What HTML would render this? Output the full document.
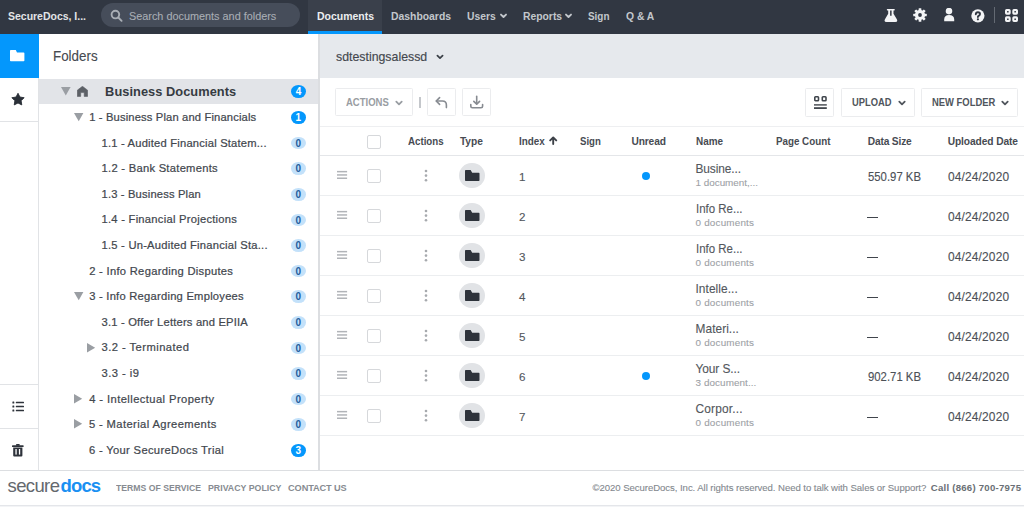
<!DOCTYPE html>
<html><head><meta charset="utf-8"><style>
html,body{margin:0;padding:0;}
body{width:1024px;height:507px;overflow:hidden;position:relative;background:#fff;font-family:"Liberation Sans",sans-serif;}
.r{position:absolute;display:block;}
.t{position:absolute;white-space:nowrap;font-family:"Liberation Sans",sans-serif;}
.badge{width:14.7px;height:12.8px;border-radius:50%;font-size:10px;line-height:14.6px;text-align:center;font-weight:700;font-family:"Liberation Sans",sans-serif;}
.cb{width:13.7px;height:14.1px;box-sizing:border-box;border:1px solid #d6d8db;border-radius:2px;background:#fff;}
</style></head><body>
<!-- NAV -->
<div class="r" style="left:0;top:0;width:1024px;height:34px;background:#313742"></div>
<div class="r" style="left:100.6px;top:3.4px;width:199.7px;height:24.1px;border-radius:12.1px;background:#464d5a"></div>
<svg class="r" style="left:109px;top:8.3px" width="16" height="16" viewBox="0 0 16 16"><circle cx="6.4" cy="6.6" r="3.8" fill="none" stroke="#a9aeb5" stroke-width="1.9"/><path d="M9.3 9.5 L12.6 12.8" stroke="#a9aeb5" stroke-width="1.9" stroke-linecap="round"/></svg>
<div class="r" style="left:308px;top:0;width:74px;height:34px;background:#3a404b"></div>
<div class="r" style="left:308px;top:30.6px;width:74px;height:3px;background:#0497fc"></div>
<svg class="r" style="left:499px;top:12.0px" width="10" height="8" viewBox="0 0 10 8"><path d="M2.0 2.6 L4.5 5.0 L7.0 2.6" fill="none" stroke="#c3c7cc" stroke-width="1.9" stroke-linecap="round" stroke-linejoin="round"/></svg>
<svg class="r" style="left:563.5px;top:12.0px" width="10" height="8" viewBox="0 0 10 8"><path d="M2.0 2.6 L4.5 5.0 L7.0 2.6" fill="none" stroke="#c3c7cc" stroke-width="1.9" stroke-linecap="round" stroke-linejoin="round"/></svg>
<!-- flask -->
<svg class="r" style="left:884.4px;top:8.8px" width="14" height="14" viewBox="0 0 14 14"><path d="M3.4 0 H10.2 Q10.8 0 10.8 0.7 Q10.8 1.4 10.2 1.4 H9.5 V4.8 L12.4 9.6 Q14.6 13.1 11.2 13.1 H2.6 Q-0.8 13.1 1.4 9.6 L4.2 4.8 V1.4 H3.4 Q2.8 1.4 2.8 0.7 Q2.8 0 3.4 0 Z" fill="#f3f4f6"/><path d="M6.1 1.4 V6.8 H7.6 V1.4 Z" fill="#313742"/></svg>
<!-- gear -->
<svg class="r" style="left:912.9px;top:8.1px" width="14" height="14" viewBox="0 0 14 14"><g fill="#f3f4f6" transform="translate(7 7)"><circle r="5.1"/><rect x="-1.35" y="-6.75" width="2.7" height="13.5" rx="0.5"/><rect x="-1.35" y="-6.75" width="2.7" height="13.5" rx="0.5" transform="rotate(45)"/><rect x="-1.35" y="-6.75" width="2.7" height="13.5" rx="0.5" transform="rotate(90)"/><rect x="-1.35" y="-6.75" width="2.7" height="13.5" rx="0.5" transform="rotate(135)"/></g><circle cx="7" cy="7" r="1.9" fill="#313742"/></svg>
<!-- user -->
<svg class="r" style="left:943.5px;top:8.4px" width="11" height="14" viewBox="0 0 11 14"><circle cx="5.0" cy="3.1" r="3.3" fill="#f3f4f6"/><path d="M0.2 13.2 V11.6 Q0.2 7.0 5.1 7.0 Q10.2 7.0 10.2 11.6 V13.2 Z" fill="#f3f4f6"/></svg>
<!-- help -->
<svg class="r" style="left:970.5px;top:8.6px" width="14" height="14" viewBox="0 0 14 14"><circle cx="6.9" cy="6.8" r="6.6" fill="#f3f4f6"/><path d="M4.8 5.3 Q4.9 3.2 6.9 3.2 Q9.0 3.2 9.0 5.0 Q9.0 6.2 7.7 6.8 Q6.9 7.2 6.9 8.1" fill="none" stroke="#313742" stroke-width="1.9" stroke-linecap="round"/><circle cx="6.9" cy="10.3" r="1.1" fill="#313742"/></svg>
<div class="r" style="left:993.8px;top:7.2px;width:1.1px;height:15.4px;background:#646a73"></div>
<!-- grid -->
<svg class="r" style="left:1004.8px;top:8.6px" width="14" height="14" viewBox="0 0 14 14"><g fill="none" stroke="#f3f4f6" stroke-width="2.1"><rect x="1.05" y="1.05" width="3.6" height="3.6" rx="0.6"/><rect x="8.35" y="1.05" width="3.6" height="3.6" rx="0.6"/><rect x="1.05" y="8.35" width="3.6" height="3.6" rx="0.6"/><rect x="8.35" y="8.35" width="3.6" height="3.6" rx="0.6"/></g></svg>

<!-- LEFT ICON SIDEBAR -->
<div class="r" style="left:0;top:34px;width:39px;height:43.6px;background:#0497fc"></div>
<svg class="r" style="left:10.3px;top:50.2px" width="15" height="12" viewBox="0 0 15 12"><path d="M0.8 0 H5.8 L7.0 2.5 H13.6 Q14.4 2.5 14.4 3.3 V10.4 Q14.4 11.2 13.6 11.2 H0.8 Q0 11.2 0 10.4 V0.8 Q0 0 0.8 0 Z" fill="#ffffff"/></svg>
<svg class="r" style="left:10.9px;top:92.3px" width="14" height="14" viewBox="0 0 24 24"><path d="M12.00 2.20 L15.29 8.67 L22.46 9.80 L17.33 14.93 L18.47 22.10 L12.00 18.80 L5.53 22.10 L6.67 14.93 L1.54 9.80 L8.71 8.67 Z" fill="#2b3038" stroke="#2b3038" stroke-width="1.6" stroke-linejoin="round"/></svg>
<div class="r" style="left:0;top:121.4px;width:38.5px;height:1px;background:#e1e3e6"></div>
<div class="r" style="left:38.4px;top:77.6px;width:1px;height:393px;background:#e1e3e6"></div>
<div class="r" style="left:0;top:384.3px;width:38.5px;height:1px;background:#e1e3e6"></div>
<div class="r" style="left:0;top:428px;width:38.5px;height:1px;background:#e1e3e6"></div>
<svg class="r" style="left:11.5px;top:400.5px" width="13" height="11" viewBox="0 0 13 11"><g fill="#2e333b"><rect x="0.4" y="0.6" width="1.9" height="1.9" rx="0.5"/><rect x="0.4" y="4.6" width="1.9" height="1.9" rx="0.5"/><rect x="0.4" y="8.6" width="1.9" height="1.9" rx="0.5"/><rect x="3.8" y="0.8" width="8.2" height="1.5" rx="0.5"/><rect x="3.8" y="4.8" width="8.2" height="1.5" rx="0.5"/><rect x="3.8" y="8.8" width="8.2" height="1.5" rx="0.5"/></g></svg>
<svg class="r" style="left:11.8px;top:443.8px" width="12" height="13" viewBox="0 0 12 13"><g fill="#2e333b"><rect x="0" y="1.3" width="11.6" height="1.8" rx="0.4"/><rect x="4" y="0" width="3.6" height="1.8" rx="0.4"/><path d="M1.2 3.6 H10.4 V11.6 Q10.4 12.6 9.4 12.6 H2.2 Q1.2 12.6 1.2 11.6 Z"/></g><g fill="#ffffff"><rect x="3.4" y="5" width="1.3" height="5.6"/><rect x="6.9" y="5" width="1.3" height="5.6"/></g></svg>

<!-- FOLDER PANEL -->
<div class="r" style="left:39.4px;top:78.7px;width:278.8px;height:24.9px;background:#e2e4e8"></div>
<div class="r" style="left:318.2px;top:34px;width:1.4px;height:436.5px;background:#dcdee1"></div>
<svg class="r" style="left:60.6px;top:86.8px" width="10" height="9" viewBox="0 0 10 9"><path d="M0 0 H9.6 L4.8 8.4 Z" fill="#9a9ea3"/></svg>
<svg class="r" style="left:76.9px;top:85.5px" width="11" height="12" viewBox="0 0 11 12"><path d="M5.45 0.3 L10.6 4.2 V10.4 H7.2 V6.6 H3.7 V10.4 H0.3 V4.2 Z" fill="#5c6066" stroke="#5c6066" stroke-width="0.6" stroke-linejoin="round"/></svg>

<svg class="r" style="left:74.0px;top:112.60px" width="10" height="9" viewBox="0 0 10 9"><path d="M0 0 H9.4 L4.7 8.2 Z" fill="#9a9ea3"/></svg>
<div class="r badge" style="left:291.0px;top:111.10px;background:#0497fc;color:#ffffff">1</div>
<div class="r badge" style="left:291.0px;top:136.70px;background:#c3e1fa;color:#1f5c9c">0</div>
<div class="r badge" style="left:291.0px;top:162.30px;background:#c3e1fa;color:#1f5c9c">0</div>
<div class="r badge" style="left:291.0px;top:187.90px;background:#c3e1fa;color:#1f5c9c">0</div>
<div class="r badge" style="left:291.0px;top:213.50px;background:#c3e1fa;color:#1f5c9c">0</div>
<div class="r badge" style="left:291.0px;top:239.10px;background:#c3e1fa;color:#1f5c9c">0</div>
<div class="r badge" style="left:291.0px;top:264.70px;background:#c3e1fa;color:#1f5c9c">0</div>
<svg class="r" style="left:74.0px;top:291.80px" width="10" height="9" viewBox="0 0 10 9"><path d="M0 0 H9.4 L4.7 8.2 Z" fill="#9a9ea3"/></svg>
<div class="r badge" style="left:291.0px;top:290.30px;background:#c3e1fa;color:#1f5c9c">0</div>
<div class="r badge" style="left:291.0px;top:315.90px;background:#c3e1fa;color:#1f5c9c">0</div>
<svg class="r" style="left:87.0px;top:342.60px" width="9" height="10" viewBox="0 0 9 10"><path d="M0 0 L8.2 4.7 L0 9.4 Z" fill="#9a9ea3"/></svg>
<div class="r badge" style="left:291.0px;top:341.50px;background:#c3e1fa;color:#1f5c9c">0</div>
<div class="r badge" style="left:291.0px;top:367.10px;background:#c3e1fa;color:#1f5c9c">0</div>
<svg class="r" style="left:74.2px;top:393.80px" width="9" height="10" viewBox="0 0 9 10"><path d="M0 0 L8.2 4.7 L0 9.4 Z" fill="#9a9ea3"/></svg>
<div class="r badge" style="left:291.0px;top:392.70px;background:#c3e1fa;color:#1f5c9c">0</div>
<svg class="r" style="left:74.2px;top:419.40px" width="9" height="10" viewBox="0 0 9 10"><path d="M0 0 L8.2 4.7 L0 9.4 Z" fill="#9a9ea3"/></svg>
<div class="r badge" style="left:291.0px;top:418.30px;background:#c3e1fa;color:#1f5c9c">0</div>
<div class="r badge" style="left:291.0px;top:443.90px;background:#0497fc;color:#ffffff">3</div>
<div class="r badge" style="left:291.0px;top:85.40px;width:14.9px;background:#0497fc;color:#fff">4</div>
<div class="r" style="left:319.6px;top:34px;width:704.4px;height:43.9px;background:#e6e9ed"></div>
<div class="r" style="left:335.2px;top:88.2px;width:77.4px;height:28.2px;box-sizing:border-box;border:1px solid #ebecee;border-radius:1.5px;background:#fff"></div>
<div class="r" style="left:427.4px;top:88.2px;width:28.2px;height:28.2px;box-sizing:border-box;border:1px solid #ebecee;border-radius:1.5px;background:#fff"></div>
<div class="r" style="left:462.3px;top:88.2px;width:28.7px;height:28.2px;box-sizing:border-box;border:1px solid #ebecee;border-radius:1.5px;background:#fff"></div>
<div class="r" style="left:805.3px;top:87.9px;width:29.2px;height:28.8px;box-sizing:border-box;border:1px solid #ebecee;border-radius:1.5px;background:#fff"></div>
<div class="r" style="left:840.7px;top:87.9px;width:74.5px;height:28.8px;box-sizing:border-box;border:1px solid #ebecee;border-radius:1.5px;background:#fff"></div>
<div class="r" style="left:921.4px;top:87.9px;width:97.1px;height:28.8px;box-sizing:border-box;border:1px solid #ebecee;border-radius:1.5px;background:#fff"></div>
<svg class="r" style="left:395.3px;top:100.0px" width="9" height="7" viewBox="0 0 9 7"><path d="M1.3 1.6 L4 4.3 L6.7 1.6" fill="none" stroke="#999da2" stroke-width="1.8" stroke-linecap="round" stroke-linejoin="round"/></svg>
<svg class="r" style="left:897.6px;top:100.0px" width="9" height="7" viewBox="0 0 9 7"><path d="M1.3 1.6 L4 4.3 L6.7 1.6" fill="none" stroke="#50555c" stroke-width="1.8" stroke-linecap="round" stroke-linejoin="round"/></svg>
<svg class="r" style="left:1000.6px;top:100.0px" width="9" height="7" viewBox="0 0 9 7"><path d="M1.3 1.6 L4 4.3 L6.7 1.6" fill="none" stroke="#50555c" stroke-width="1.8" stroke-linecap="round" stroke-linejoin="round"/></svg>
<svg class="r" style="left:435.8px;top:54.3px" width="9" height="7" viewBox="0 0 9 7"><path d="M1.4 1.6 L4 4.2 L6.6 1.6" fill="none" stroke="#3b4047" stroke-width="1.7" stroke-linecap="round" stroke-linejoin="round"/></svg>
<div class="r" style="left:419.4px;top:96.7px;width:1.2px;height:11.8px;background:#c4c7cb"></div>
<svg class="r" style="left:433.5px;top:94.5px" width="16" height="16" viewBox="0 0 16 16"><path d="M5.6 2.6 L2.2 6 L5.6 9.4" fill="none" stroke="#878b91" stroke-width="1.6" stroke-linecap="round" stroke-linejoin="round"/><path d="M2.5 6 H8.4 Q12.4 6 12.4 10 V12.6" fill="none" stroke="#878b91" stroke-width="1.6" stroke-linecap="round"/></svg>
<svg class="r" style="left:469px;top:94.5px" width="16" height="16" viewBox="0 0 16 16"><path d="M7.7 1.4 V8.8" stroke="#878b91" stroke-width="1.6" stroke-linecap="round"/><path d="M4.8 6.4 L7.7 9.2 L10.6 6.4" fill="none" stroke="#878b91" stroke-width="1.6" stroke-linecap="round" stroke-linejoin="round"/><path d="M1.8 9.6 V11.2 Q1.8 12.8 3.4 12.8 H12 Q13.6 12.8 13.6 11.2 V9.6" fill="none" stroke="#878b91" stroke-width="1.6" stroke-linejoin="round" stroke-linecap="round"/></svg>
<svg class="r" style="left:813.5px;top:95.9px" width="13" height="14" viewBox="0 0 13 14"><g fill="none" stroke="#41464d" stroke-width="1.6"><rect x="0.8" y="0.8" width="3.7" height="3.9" rx="0.7"/><rect x="8.3" y="0.8" width="3.7" height="3.9" rx="0.7"/></g><rect x="0" y="8.2" width="12.8" height="1.4" fill="#41464d"/><rect x="0" y="11.2" width="12.8" height="1.8" fill="#41464d"/></svg>
<div class="r" style="left:319.6px;top:126.2px;width:704.4px;height:1px;background:#eeeff1"></div>
<div class="r" style="left:319.6px;top:154.8px;width:704.4px;height:1.2px;background:#e4e6e9"></div>
<div class="r cb" style="left:366.9px;top:134.5px"></div>
<svg class="r" style="left:549.3px;top:135.9px" width="10" height="10" viewBox="0 0 10 10"><path d="M4.2 8.0 V1.8 M1.2 4.4 L4.2 1.4 L7.2 4.4" fill="none" stroke="#3d4148" stroke-width="1.9" stroke-linecap="round" stroke-linejoin="round"/></svg>
<div class="r" style="left:319.6px;top:195.1px;width:704.4px;height:1px;background:#eceef0"></div>
<svg class="r" style="left:336.6px;top:170.0px" width="11" height="9" viewBox="0 0 11 9"><g fill="#b1b4b8"><rect x="0" y="0.9" width="10.1" height="1.5"/><rect x="0" y="4.2" width="10.1" height="1.5"/><rect x="0" y="7.5" width="10.1" height="1.5"/></g></svg>
<div class="r cb" style="left:367.1px;top:168.9px"></div>
<svg class="r" style="left:423.5px;top:168.5px" width="4" height="14" viewBox="0 0 4 14"><g fill="#a7aaae"><circle cx="2" cy="2" r="1.3"/><circle cx="2" cy="6.6" r="1.3"/><circle cx="2" cy="11.2" r="1.3"/></g></svg>
<div class="r" style="left:459.1px;top:162.6px;width:25.6px;height:25.6px;border-radius:50%;background:#e1e3e6"></div>
<svg class="r" style="left:464.8px;top:170.1px" width="15" height="11" viewBox="0 0 15 11"><path d="M0.8 0 H5.6 L7.2 2.7 H13.7 Q14.5 2.7 14.5 3.5 V10.2 Q14.5 11 13.7 11 H0.8 Q0 11 0 10.2 V0.8 Q0 0 0.8 0 Z" fill="#2e333b"/></svg>
<div class="r" style="left:641.7px;top:171.9px;width:8.2px;height:8.2px;border-radius:50%;background:#0497fc"></div>
<div class="r" style="left:319.6px;top:235.1px;width:704.4px;height:1px;background:#eceef0"></div>
<svg class="r" style="left:336.6px;top:210.0px" width="11" height="9" viewBox="0 0 11 9"><g fill="#b1b4b8"><rect x="0" y="0.9" width="10.1" height="1.5"/><rect x="0" y="4.2" width="10.1" height="1.5"/><rect x="0" y="7.5" width="10.1" height="1.5"/></g></svg>
<div class="r cb" style="left:367.1px;top:208.9px"></div>
<svg class="r" style="left:423.5px;top:208.5px" width="4" height="14" viewBox="0 0 4 14"><g fill="#a7aaae"><circle cx="2" cy="2" r="1.3"/><circle cx="2" cy="6.6" r="1.3"/><circle cx="2" cy="11.2" r="1.3"/></g></svg>
<div class="r" style="left:459.1px;top:202.6px;width:25.6px;height:25.6px;border-radius:50%;background:#e1e3e6"></div>
<svg class="r" style="left:464.8px;top:210.1px" width="15" height="11" viewBox="0 0 15 11"><path d="M0.8 0 H5.6 L7.2 2.7 H13.7 Q14.5 2.7 14.5 3.5 V10.2 Q14.5 11 13.7 11 H0.8 Q0 11 0 10.2 V0.8 Q0 0 0.8 0 Z" fill="#2e333b"/></svg>
<div class="r" style="left:866.7px;top:217.0px;width:11.4px;height:1.2px;background:#40454c"></div>
<div class="r" style="left:319.6px;top:275.1px;width:704.4px;height:1px;background:#eceef0"></div>
<svg class="r" style="left:336.6px;top:250.0px" width="11" height="9" viewBox="0 0 11 9"><g fill="#b1b4b8"><rect x="0" y="0.9" width="10.1" height="1.5"/><rect x="0" y="4.2" width="10.1" height="1.5"/><rect x="0" y="7.5" width="10.1" height="1.5"/></g></svg>
<div class="r cb" style="left:367.1px;top:248.9px"></div>
<svg class="r" style="left:423.5px;top:248.5px" width="4" height="14" viewBox="0 0 4 14"><g fill="#a7aaae"><circle cx="2" cy="2" r="1.3"/><circle cx="2" cy="6.6" r="1.3"/><circle cx="2" cy="11.2" r="1.3"/></g></svg>
<div class="r" style="left:459.1px;top:242.6px;width:25.6px;height:25.6px;border-radius:50%;background:#e1e3e6"></div>
<svg class="r" style="left:464.8px;top:250.1px" width="15" height="11" viewBox="0 0 15 11"><path d="M0.8 0 H5.6 L7.2 2.7 H13.7 Q14.5 2.7 14.5 3.5 V10.2 Q14.5 11 13.7 11 H0.8 Q0 11 0 10.2 V0.8 Q0 0 0.8 0 Z" fill="#2e333b"/></svg>
<div class="r" style="left:866.7px;top:257.0px;width:11.4px;height:1.2px;background:#40454c"></div>
<div class="r" style="left:319.6px;top:315.1px;width:704.4px;height:1px;background:#eceef0"></div>
<svg class="r" style="left:336.6px;top:290.0px" width="11" height="9" viewBox="0 0 11 9"><g fill="#b1b4b8"><rect x="0" y="0.9" width="10.1" height="1.5"/><rect x="0" y="4.2" width="10.1" height="1.5"/><rect x="0" y="7.5" width="10.1" height="1.5"/></g></svg>
<div class="r cb" style="left:367.1px;top:288.9px"></div>
<svg class="r" style="left:423.5px;top:288.5px" width="4" height="14" viewBox="0 0 4 14"><g fill="#a7aaae"><circle cx="2" cy="2" r="1.3"/><circle cx="2" cy="6.6" r="1.3"/><circle cx="2" cy="11.2" r="1.3"/></g></svg>
<div class="r" style="left:459.1px;top:282.6px;width:25.6px;height:25.6px;border-radius:50%;background:#e1e3e6"></div>
<svg class="r" style="left:464.8px;top:290.1px" width="15" height="11" viewBox="0 0 15 11"><path d="M0.8 0 H5.6 L7.2 2.7 H13.7 Q14.5 2.7 14.5 3.5 V10.2 Q14.5 11 13.7 11 H0.8 Q0 11 0 10.2 V0.8 Q0 0 0.8 0 Z" fill="#2e333b"/></svg>
<div class="r" style="left:866.7px;top:297.0px;width:11.4px;height:1.2px;background:#40454c"></div>
<div class="r" style="left:319.6px;top:355.1px;width:704.4px;height:1px;background:#eceef0"></div>
<svg class="r" style="left:336.6px;top:330.0px" width="11" height="9" viewBox="0 0 11 9"><g fill="#b1b4b8"><rect x="0" y="0.9" width="10.1" height="1.5"/><rect x="0" y="4.2" width="10.1" height="1.5"/><rect x="0" y="7.5" width="10.1" height="1.5"/></g></svg>
<div class="r cb" style="left:367.1px;top:328.9px"></div>
<svg class="r" style="left:423.5px;top:328.5px" width="4" height="14" viewBox="0 0 4 14"><g fill="#a7aaae"><circle cx="2" cy="2" r="1.3"/><circle cx="2" cy="6.6" r="1.3"/><circle cx="2" cy="11.2" r="1.3"/></g></svg>
<div class="r" style="left:459.1px;top:322.6px;width:25.6px;height:25.6px;border-radius:50%;background:#e1e3e6"></div>
<svg class="r" style="left:464.8px;top:330.1px" width="15" height="11" viewBox="0 0 15 11"><path d="M0.8 0 H5.6 L7.2 2.7 H13.7 Q14.5 2.7 14.5 3.5 V10.2 Q14.5 11 13.7 11 H0.8 Q0 11 0 10.2 V0.8 Q0 0 0.8 0 Z" fill="#2e333b"/></svg>
<div class="r" style="left:866.7px;top:337.0px;width:11.4px;height:1.2px;background:#40454c"></div>
<div class="r" style="left:319.6px;top:395.1px;width:704.4px;height:1px;background:#eceef0"></div>
<svg class="r" style="left:336.6px;top:370.0px" width="11" height="9" viewBox="0 0 11 9"><g fill="#b1b4b8"><rect x="0" y="0.9" width="10.1" height="1.5"/><rect x="0" y="4.2" width="10.1" height="1.5"/><rect x="0" y="7.5" width="10.1" height="1.5"/></g></svg>
<div class="r cb" style="left:367.1px;top:368.9px"></div>
<svg class="r" style="left:423.5px;top:368.5px" width="4" height="14" viewBox="0 0 4 14"><g fill="#a7aaae"><circle cx="2" cy="2" r="1.3"/><circle cx="2" cy="6.6" r="1.3"/><circle cx="2" cy="11.2" r="1.3"/></g></svg>
<div class="r" style="left:459.1px;top:362.6px;width:25.6px;height:25.6px;border-radius:50%;background:#e1e3e6"></div>
<svg class="r" style="left:464.8px;top:370.1px" width="15" height="11" viewBox="0 0 15 11"><path d="M0.8 0 H5.6 L7.2 2.7 H13.7 Q14.5 2.7 14.5 3.5 V10.2 Q14.5 11 13.7 11 H0.8 Q0 11 0 10.2 V0.8 Q0 0 0.8 0 Z" fill="#2e333b"/></svg>
<div class="r" style="left:641.7px;top:371.9px;width:8.2px;height:8.2px;border-radius:50%;background:#0497fc"></div>
<div class="r" style="left:319.6px;top:435.1px;width:704.4px;height:1px;background:#eceef0"></div>
<svg class="r" style="left:336.6px;top:410.0px" width="11" height="9" viewBox="0 0 11 9"><g fill="#b1b4b8"><rect x="0" y="0.9" width="10.1" height="1.5"/><rect x="0" y="4.2" width="10.1" height="1.5"/><rect x="0" y="7.5" width="10.1" height="1.5"/></g></svg>
<div class="r cb" style="left:367.1px;top:408.9px"></div>
<svg class="r" style="left:423.5px;top:408.5px" width="4" height="14" viewBox="0 0 4 14"><g fill="#a7aaae"><circle cx="2" cy="2" r="1.3"/><circle cx="2" cy="6.6" r="1.3"/><circle cx="2" cy="11.2" r="1.3"/></g></svg>
<div class="r" style="left:459.1px;top:402.6px;width:25.6px;height:25.6px;border-radius:50%;background:#e1e3e6"></div>
<svg class="r" style="left:464.8px;top:410.1px" width="15" height="11" viewBox="0 0 15 11"><path d="M0.8 0 H5.6 L7.2 2.7 H13.7 Q14.5 2.7 14.5 3.5 V10.2 Q14.5 11 13.7 11 H0.8 Q0 11 0 10.2 V0.8 Q0 0 0.8 0 Z" fill="#2e333b"/></svg>
<div class="r" style="left:866.7px;top:417.0px;width:11.4px;height:1.2px;background:#40454c"></div>
<div class="r" style="left:0;top:470px;width:1024px;height:37px;background:#ffffff"></div>
<div class="r" style="left:0;top:470px;width:1024px;height:1.2px;background:#dcdee1"></div>
<div class="r" style="left:0;top:505.6px;width:1024px;height:1.4px;background:#f3f4f6"></div>
<div class="r" style="left:0;top:504.8px;width:1024px;height:1.1px;background:#e4e6ea"></div>
<span class="t" style="left:7.5px;top:477.2px;font-size:18.5px;line-height:18.5px;color:#64686d;letter-spacing:-0.62px;font-weight:400">secure</span>
<span class="t" style="left:60.6px;top:477.2px;font-size:18.5px;line-height:18.5px;color:#1a90f2;letter-spacing:-0.9px;font-weight:700">docs</span>
<span class="t" style="left:8.10px;top:10.72px;font-size:11.2px;line-height:11.2px;font-weight:700;color:#e2e4e7;letter-spacing:0.000px;transform:scaleX(0.9361);transform-origin:0 0">SecureDocs, I...</span>
<span class="t" style="left:128.70px;top:10.62px;font-size:11.2px;line-height:11.2px;font-weight:400;color:#a9aeb5;letter-spacing:0.000px;-webkit-text-stroke:0.1px #a9aeb5;transform:scaleX(0.9707);transform-origin:0 0">Search documents and folders</span>
<span class="t" style="left:317.20px;top:10.72px;font-size:11.2px;line-height:11.2px;font-weight:700;color:#eceef0;letter-spacing:0.000px;transform:scaleX(0.9356);transform-origin:0 0">Documents</span>
<span class="t" style="left:390.80px;top:10.72px;font-size:11.2px;line-height:11.2px;font-weight:700;color:#c3c7cc;letter-spacing:0.000px;transform:scaleX(0.9280);transform-origin:0 0">Dashboards</span>
<span class="t" style="left:467.40px;top:10.72px;font-size:11.2px;line-height:11.2px;font-weight:700;color:#c3c7cc;letter-spacing:0.000px;transform:scaleX(0.9226);transform-origin:0 0">Users</span>
<span class="t" style="left:522.50px;top:10.72px;font-size:11.2px;line-height:11.2px;font-weight:700;color:#c3c7cc;letter-spacing:0.000px;transform:scaleX(0.9248);transform-origin:0 0">Reports</span>
<span class="t" style="left:587.90px;top:10.72px;font-size:11.2px;line-height:11.2px;font-weight:700;color:#c3c7cc;letter-spacing:0.000px;transform:scaleX(0.8866);transform-origin:0 0">Sign</span>
<span class="t" style="left:626.00px;top:10.72px;font-size:11.2px;line-height:11.2px;font-weight:700;color:#c3c7cc;letter-spacing:0.000px;transform:scaleX(0.9227);transform-origin:0 0">Q &amp; A</span>
<span class="t" style="left:52.60px;top:49.35px;font-size:14.0px;line-height:14.0px;font-weight:400;color:#464a50;letter-spacing:0.000px;-webkit-text-stroke:0.12px #464a50;transform:scaleX(0.9553);transform-origin:0 0">Folders</span>
<span class="t" style="left:105.10px;top:85.56px;font-size:12.8px;line-height:12.8px;font-weight:700;color:#363b42;letter-spacing:0.051px">Business Documents</span>
<span class="t" style="left:89.20px;top:111.92px;font-size:11.2px;line-height:11.2px;font-weight:400;color:#42474e;letter-spacing:0.151px;-webkit-text-stroke:0.22px #42474e">1 - Business Plan and Financials</span>
<span class="t" style="left:101.50px;top:137.52px;font-size:11.2px;line-height:11.2px;font-weight:400;color:#42474e;letter-spacing:0.201px;-webkit-text-stroke:0.22px #42474e">1.1 - Audited Financial Statem...</span>
<span class="t" style="left:101.50px;top:163.12px;font-size:11.2px;line-height:11.2px;font-weight:400;color:#42474e;letter-spacing:0.275px;-webkit-text-stroke:0.22px #42474e">1.2 - Bank Statements</span>
<span class="t" style="left:101.50px;top:188.72px;font-size:11.2px;line-height:11.2px;font-weight:400;color:#42474e;letter-spacing:0.162px;-webkit-text-stroke:0.22px #42474e">1.3 - Business Plan</span>
<span class="t" style="left:101.50px;top:214.32px;font-size:11.2px;line-height:11.2px;font-weight:400;color:#42474e;letter-spacing:0.257px;-webkit-text-stroke:0.22px #42474e">1.4 - Financial Projections</span>
<span class="t" style="left:101.50px;top:239.92px;font-size:11.2px;line-height:11.2px;font-weight:400;color:#42474e;letter-spacing:0.232px;-webkit-text-stroke:0.22px #42474e">1.5 - Un-Audited Financial Sta...</span>
<span class="t" style="left:89.20px;top:265.52px;font-size:11.2px;line-height:11.2px;font-weight:400;color:#42474e;letter-spacing:0.292px;-webkit-text-stroke:0.22px #42474e">2 - Info Regarding Disputes</span>
<span class="t" style="left:89.20px;top:291.12px;font-size:11.2px;line-height:11.2px;font-weight:400;color:#42474e;letter-spacing:0.240px;-webkit-text-stroke:0.22px #42474e">3 - Info Regarding Employees</span>
<span class="t" style="left:101.50px;top:316.72px;font-size:11.2px;line-height:11.2px;font-weight:400;color:#42474e;letter-spacing:0.191px;-webkit-text-stroke:0.22px #42474e">3.1 - Offer Letters and EPIIA</span>
<span class="t" style="left:101.50px;top:342.32px;font-size:11.2px;line-height:11.2px;font-weight:400;color:#42474e;letter-spacing:0.457px;-webkit-text-stroke:0.22px #42474e">3.2 - Terminated</span>
<span class="t" style="left:101.50px;top:367.92px;font-size:11.2px;line-height:11.2px;font-weight:400;color:#42474e;letter-spacing:0.471px;-webkit-text-stroke:0.22px #42474e">3.3 - i9</span>
<span class="t" style="left:89.20px;top:393.52px;font-size:11.2px;line-height:11.2px;font-weight:400;color:#42474e;letter-spacing:0.415px;-webkit-text-stroke:0.22px #42474e">4 - Intellectual Property</span>
<span class="t" style="left:88.90px;top:419.12px;font-size:11.2px;line-height:11.2px;font-weight:400;color:#42474e;letter-spacing:0.392px;-webkit-text-stroke:0.22px #42474e">5 - Material Agreements</span>
<span class="t" style="left:88.90px;top:444.72px;font-size:11.2px;line-height:11.2px;font-weight:400;color:#42474e;letter-spacing:0.335px;-webkit-text-stroke:0.22px #42474e">6 - Your SecureDocs Trial</span>
<span class="t" style="left:335.60px;top:51.06px;font-size:12.8px;line-height:12.8px;font-weight:400;color:#43474d;letter-spacing:0.000px;-webkit-text-stroke:0.15px #43474d;transform:scaleX(0.9640);transform-origin:0 0">sdtestingsalessd</span>
<span class="t" style="left:346.10px;top:98.23px;font-size:10.0px;line-height:10.0px;font-weight:700;color:#999da2;letter-spacing:0.000px;transform:scaleX(0.9511);transform-origin:0 0">ACTIONS</span>
<span class="t" style="left:851.70px;top:98.23px;font-size:10.0px;line-height:10.0px;font-weight:700;color:#50555c;letter-spacing:0.000px;transform:scaleX(0.9353);transform-origin:0 0">UPLOAD</span>
<span class="t" style="left:931.70px;top:98.23px;font-size:10.0px;line-height:10.0px;font-weight:700;color:#50555c;letter-spacing:0.000px;transform:scaleX(0.9417);transform-origin:0 0">NEW FOLDER</span>
<span class="t" style="left:407.90px;top:136.96px;font-size:10.2px;line-height:10.2px;font-weight:700;color:#474b52;letter-spacing:0.000px;transform:scaleX(0.9529);transform-origin:0 0">Actions</span>
<span class="t" style="left:459.90px;top:136.96px;font-size:10.2px;line-height:10.2px;font-weight:700;color:#474b52;letter-spacing:-0.010px">Type</span>
<span class="t" style="left:519.20px;top:136.96px;font-size:10.2px;line-height:10.2px;font-weight:700;color:#474b52;letter-spacing:0.000px;transform:scaleX(0.9696);transform-origin:0 0">Index</span>
<span class="t" style="left:579.50px;top:136.96px;font-size:10.2px;line-height:10.2px;font-weight:700;color:#474b52;letter-spacing:0.000px;transform:scaleX(0.9421);transform-origin:0 0">Sign</span>
<span class="t" style="left:631.50px;top:136.96px;font-size:10.2px;line-height:10.2px;font-weight:700;color:#474b52;letter-spacing:-0.142px">Unread</span>
<span class="t" style="left:695.50px;top:136.96px;font-size:10.2px;line-height:10.2px;font-weight:700;color:#474b52;letter-spacing:0.000px;transform:scaleX(0.9730);transform-origin:0 0">Name</span>
<span class="t" style="left:775.60px;top:136.96px;font-size:10.2px;line-height:10.2px;font-weight:700;color:#474b52;letter-spacing:0.000px;transform:scaleX(0.9610);transform-origin:0 0">Page Count</span>
<span class="t" style="left:867.70px;top:136.96px;font-size:10.2px;line-height:10.2px;font-weight:700;color:#474b52;letter-spacing:-0.150px">Data Size</span>
<span class="t" style="left:947.70px;top:136.96px;font-size:10.2px;line-height:10.2px;font-weight:700;color:#474b52;letter-spacing:-0.086px">Uploaded Date</span>
<span class="t" style="left:519.00px;top:170.78px;font-size:11.6px;line-height:11.6px;font-weight:400;color:#53575d;letter-spacing:0.000px;-webkit-text-stroke:0.12px #53575d">1</span>
<span class="t" style="left:695.50px;top:163.62px;font-size:11.9px;line-height:11.9px;font-weight:400;color:#53575d;letter-spacing:-0.098px;-webkit-text-stroke:0.12px #53575d">Busine...</span>
<span class="t" style="left:695.50px;top:178.12px;font-size:9.9px;line-height:9.9px;font-weight:400;color:#9da1a6;letter-spacing:-0.006px;-webkit-text-stroke:0.1px #9da1a6">1 document,...</span>
<span class="t" style="left:867.90px;top:172.22px;font-size:11.9px;line-height:11.9px;font-weight:400;color:#4c5056;letter-spacing:0.000px;-webkit-text-stroke:0.12px #4c5056;transform:scaleX(0.9541);transform-origin:0 0">550.97 KB</span>
<span class="t" style="left:947.90px;top:172.22px;font-size:11.9px;line-height:11.9px;font-weight:400;color:#4c5056;letter-spacing:0.187px;-webkit-text-stroke:0.12px #4c5056">04/24/2020</span>
<span class="t" style="left:519.00px;top:210.78px;font-size:11.6px;line-height:11.6px;font-weight:400;color:#53575d;letter-spacing:0.000px;-webkit-text-stroke:0.12px #53575d">2</span>
<span class="t" style="left:695.50px;top:203.62px;font-size:11.9px;line-height:11.9px;font-weight:400;color:#53575d;letter-spacing:0.000px;-webkit-text-stroke:0.12px #53575d;transform:scaleX(0.9637);transform-origin:0 0">Info Re...</span>
<span class="t" style="left:695.50px;top:218.12px;font-size:9.9px;line-height:9.9px;font-weight:400;color:#9da1a6;letter-spacing:0.195px;-webkit-text-stroke:0.1px #9da1a6">0 documents</span>
<span class="t" style="left:947.90px;top:212.22px;font-size:11.9px;line-height:11.9px;font-weight:400;color:#4c5056;letter-spacing:0.187px;-webkit-text-stroke:0.12px #4c5056">04/24/2020</span>
<span class="t" style="left:519.00px;top:250.78px;font-size:11.6px;line-height:11.6px;font-weight:400;color:#53575d;letter-spacing:0.000px;-webkit-text-stroke:0.12px #53575d">3</span>
<span class="t" style="left:695.50px;top:243.62px;font-size:11.9px;line-height:11.9px;font-weight:400;color:#53575d;letter-spacing:0.000px;-webkit-text-stroke:0.12px #53575d;transform:scaleX(0.9637);transform-origin:0 0">Info Re...</span>
<span class="t" style="left:695.50px;top:258.12px;font-size:9.9px;line-height:9.9px;font-weight:400;color:#9da1a6;letter-spacing:0.195px;-webkit-text-stroke:0.1px #9da1a6">0 documents</span>
<span class="t" style="left:947.90px;top:252.22px;font-size:11.9px;line-height:11.9px;font-weight:400;color:#4c5056;letter-spacing:0.187px;-webkit-text-stroke:0.12px #4c5056">04/24/2020</span>
<span class="t" style="left:519.00px;top:290.78px;font-size:11.6px;line-height:11.6px;font-weight:400;color:#53575d;letter-spacing:0.000px;-webkit-text-stroke:0.12px #53575d">4</span>
<span class="t" style="left:695.50px;top:283.62px;font-size:11.9px;line-height:11.9px;font-weight:400;color:#53575d;letter-spacing:0.062px;-webkit-text-stroke:0.12px #53575d">Intelle...</span>
<span class="t" style="left:695.50px;top:298.12px;font-size:9.9px;line-height:9.9px;font-weight:400;color:#9da1a6;letter-spacing:0.195px;-webkit-text-stroke:0.1px #9da1a6">0 documents</span>
<span class="t" style="left:947.90px;top:292.22px;font-size:11.9px;line-height:11.9px;font-weight:400;color:#4c5056;letter-spacing:0.187px;-webkit-text-stroke:0.12px #4c5056">04/24/2020</span>
<span class="t" style="left:519.00px;top:330.78px;font-size:11.6px;line-height:11.6px;font-weight:400;color:#53575d;letter-spacing:0.000px;-webkit-text-stroke:0.12px #53575d">5</span>
<span class="t" style="left:695.50px;top:323.62px;font-size:11.9px;line-height:11.9px;font-weight:400;color:#53575d;letter-spacing:0.056px;-webkit-text-stroke:0.12px #53575d">Materi...</span>
<span class="t" style="left:695.50px;top:338.12px;font-size:9.9px;line-height:9.9px;font-weight:400;color:#9da1a6;letter-spacing:0.195px;-webkit-text-stroke:0.1px #9da1a6">0 documents</span>
<span class="t" style="left:947.90px;top:332.22px;font-size:11.9px;line-height:11.9px;font-weight:400;color:#4c5056;letter-spacing:0.187px;-webkit-text-stroke:0.12px #4c5056">04/24/2020</span>
<span class="t" style="left:519.00px;top:370.78px;font-size:11.6px;line-height:11.6px;font-weight:400;color:#53575d;letter-spacing:0.000px;-webkit-text-stroke:0.12px #53575d">6</span>
<span class="t" style="left:695.50px;top:363.62px;font-size:11.9px;line-height:11.9px;font-weight:400;color:#53575d;letter-spacing:-0.084px;-webkit-text-stroke:0.12px #53575d">Your S...</span>
<span class="t" style="left:695.50px;top:378.12px;font-size:9.9px;line-height:9.9px;font-weight:400;color:#9da1a6;letter-spacing:0.080px;-webkit-text-stroke:0.1px #9da1a6">3 document...</span>
<span class="t" style="left:867.90px;top:372.22px;font-size:11.9px;line-height:11.9px;font-weight:400;color:#4c5056;letter-spacing:0.000px;-webkit-text-stroke:0.12px #4c5056;transform:scaleX(0.9541);transform-origin:0 0">902.71 KB</span>
<span class="t" style="left:947.90px;top:372.22px;font-size:11.9px;line-height:11.9px;font-weight:400;color:#4c5056;letter-spacing:0.187px;-webkit-text-stroke:0.12px #4c5056">04/24/2020</span>
<span class="t" style="left:519.00px;top:410.78px;font-size:11.6px;line-height:11.6px;font-weight:400;color:#53575d;letter-spacing:0.000px;-webkit-text-stroke:0.12px #53575d">7</span>
<span class="t" style="left:695.50px;top:403.62px;font-size:11.9px;line-height:11.9px;font-weight:400;color:#53575d;letter-spacing:0.174px;-webkit-text-stroke:0.12px #53575d">Corpor...</span>
<span class="t" style="left:695.50px;top:418.12px;font-size:9.9px;line-height:9.9px;font-weight:400;color:#9da1a6;letter-spacing:0.195px;-webkit-text-stroke:0.1px #9da1a6">0 documents</span>
<span class="t" style="left:947.90px;top:412.22px;font-size:11.9px;line-height:11.9px;font-weight:400;color:#4c5056;letter-spacing:0.187px;-webkit-text-stroke:0.12px #4c5056">04/24/2020</span>
<span class="t" style="left:115.60px;top:483.71px;font-size:9.2px;line-height:9.2px;font-weight:700;color:#878b91;letter-spacing:0.000px;transform:scaleX(0.9423);transform-origin:0 0">TERMS OF SERVICE</span>
<span class="t" style="left:207.80px;top:483.71px;font-size:9.2px;line-height:9.2px;font-weight:700;color:#878b91;letter-spacing:0.000px;transform:scaleX(0.9564);transform-origin:0 0">PRIVACY POLICY</span>
<span class="t" style="left:288.10px;top:483.71px;font-size:9.2px;line-height:9.2px;font-weight:700;color:#878b91;letter-spacing:-0.105px">CONTACT US</span>
<span class="t" style="left:592.50px;top:483.27px;font-size:9.6px;line-height:9.6px;font-weight:400;color:#83888e;letter-spacing:-0.064px;-webkit-text-stroke:0.1px #83888e">©2020 SecureDocs, Inc. All rights reserved. Need to talk with Sales or Support?</span>
<span class="t" style="left:930.80px;top:483.27px;font-size:9.6px;line-height:9.6px;font-weight:700;color:#6a6f75;letter-spacing:0.240px">Call (866) 700-7975</span>
</body></html>
